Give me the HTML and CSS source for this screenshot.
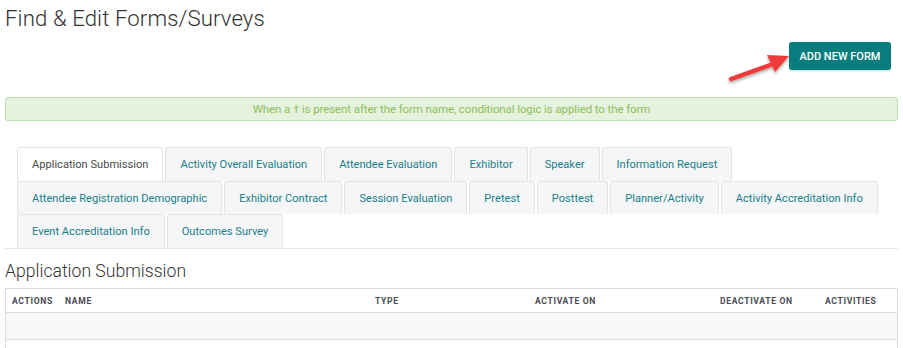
FILE: index.html
```
<!DOCTYPE html>
<html>
<head>
<meta charset="utf-8">
<link rel="stylesheet" href="styles.css">
</head>
<body>
<div class="page">
  <h1 class="title">Find &amp; Edit Forms/Surveys</h1>
  <div class="toolbar">
    <button class="btn-add">ADD NEW FORM</button>
    <svg class="arrow" width="72" height="36" viewBox="0 0 72 36">
      <defs>
        <filter id="sh" x="-20%" y="-20%" width="140%" height="160%">
          <feDropShadow dx="0" dy="2" stdDeviation="1.5" flood-color="#000" flood-opacity="0.35"/>
        </filter>
      </defs>
      <g filter="url(#sh)">
        <line x1="8" y1="28" x2="50" y2="13" stroke="#f03a3a" stroke-width="4.5" stroke-linecap="round"/>
        <polygon points="66,5 44,4 52,21" fill="#f03a3a"/>
      </g>
    </svg>
  </div>
  <div class="alert">When a † is present after the form name, conditional logic is applied to the form</div>
  <div class="tabs">
    <div class="tab-row">
      <a class="tab active">Application Submission</a>
      <a class="tab">Activity Overall Evaluation</a>
      <a class="tab">Attendee Evaluation</a>
      <a class="tab">Exhibitor</a>
      <a class="tab">Speaker</a>
      <a class="tab">Information Request</a>
    </div>
    <div class="tab-row">
      <a class="tab">Attendee Registration Demographic</a>
      <a class="tab">Exhibitor Contract</a>
      <a class="tab">Session Evaluation</a>
      <a class="tab">Pretest</a>
      <a class="tab">Posttest</a>
      <a class="tab">Planner/Activity</a>
      <a class="tab">Activity Accreditation Info</a>
    </div>
    <div class="tab-row">
      <a class="tab">Event Accreditation Info</a>
      <a class="tab">Outcomes Survey</a>
    </div>
  </div>
  <h2 class="section-title">Application Submission</h2>
  <div class="table">
    <div class="thead">
      <div class="c c-actions">Actions</div>
      <div class="c c-name">Name</div>
      <div class="c c-type">Type</div>
      <div class="c c-act">Activate On</div>
      <div class="c c-deact">Deactivate On</div>
      <div class="c c-acts">Activities</div>
    </div>
    <div class="trow shaded"></div>
  </div>
</div>
</body>
</html>
```
FILE: styles.css
```
* { box-sizing: border-box; }
html, body { margin: 0; padding: 0; background: #fff; }
body { font-family: Roboto, "Noto Sans", sans-serif; color: #333; overflow: hidden; height: 348px; }
.page { padding: 0 5px; width: 903px; }
.title {
  margin: 0;
  padding-top: 5px;
  font-size: 22.2px;
  font-weight: 300;
  line-height: 26px;
  color: #333;
  letter-spacing: 0.1px;
}
.toolbar {
  position: relative;
  display: flex;
  justify-content: flex-end;
  padding: 11px 7px 0 0;
  height: 66px;
}
.btn-add {
  width: 102px;
  height: 28px;
  border: none;
  border-radius: 3px;
  background: #097c7e;
  color: #fff;
  font-family: Roboto, sans-serif;
  font-weight: 500;
  font-size: 11px;
  padding: 0;
  box-shadow: 0 1px 2px rgba(0,0,0,0.15);
}
.arrow {
  position: absolute;
  left: 718px;
  top: 20px;
}
.alert {
  height: 24px;
  border: 1px solid #bde0aa;
  border-radius: 3px;
  background: #e5f2dd;
  color: #8dbf5d;
  font-size: 11.5px;
  line-height: 22px;
  text-align: center;
  letter-spacing: -0.1px;
}
.tabs {
  margin-top: 26px;
  padding-left: 12px;
  border-bottom: 1px solid #e3e5e8;
  display: flex;
  flex-direction: column;
}
.tab-row { display: flex; gap: 2px; }
.tab {
  display: block;
  height: 34px;
  line-height: 33px;
  padding: 0 14px;
  font-size: 11.1px;
  color: #18808a;
  background: #f5f6f7;
  border: 1px solid #e2e5e8;
  border-bottom: none;
  border-radius: 3px 3px 0 0;
  white-space: nowrap;
}
.tab.active { background: #fff; color: #4a4a4a; }
.tab-row:nth-child(2) .tab { height: 33px; }
.tab-row:nth-child(3) .tab { height: 34px; }
.section-title {
  margin: 0;
  padding-top: 11px;
  font-size: 17.6px;
  font-weight: 300;
  line-height: 22px;
  color: #333;
  height: 39px;
}
.table {
  border: 1px solid #dcdcdc;
  border-bottom: none;
  height: 60px;
}
.thead {
  display: flex;
  height: 24px;
  align-items: center;
  border-bottom: 1px solid #dcdcdc;
  font-size: 8.6px;
  font-weight: 700;
  text-transform: uppercase;
  letter-spacing: 0.65px;
  color: #4a4a55;
}
.c { white-space: nowrap; }
.c-actions { margin-left: 6px; width: 53px; }
.c-name { width: 310px; }
.c-type { width: 160px; }
.c-act { width: 185px; }
.c-deact { width: 105px; }
.trow { height: 27px; border-bottom: 1px solid #dcdcdc; }
.trow.shaded { background: #f8f8f8; }
```
